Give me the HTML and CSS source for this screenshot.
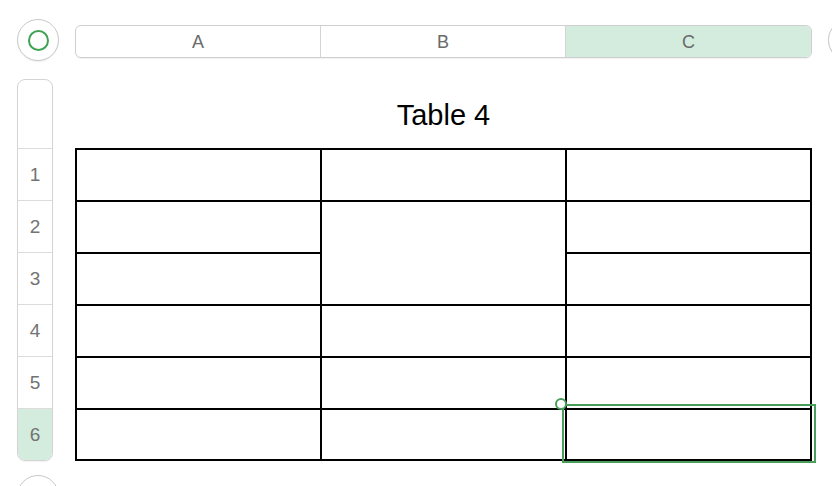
FILE: index.html
```html
<!DOCTYPE html>
<html>
<head>
<meta charset="utf-8">
<link rel="stylesheet" href="styles.css">
</head>
<body>
<div class="sheet">
  <div class="top">
    <div class="round-btn"><span class="ring"></span></div>
    <div class="col-headers">
      <div class="col">A</div>
      <div class="col">B</div>
      <div class="col sel">C</div>
    </div>
    <div class="round-btn"></div>
  </div>
  <div class="main">
    <div class="side">
      <div class="row-headers">
        <div class="rh blank"></div>
        <div class="rh">1</div>
        <div class="rh">2</div>
        <div class="rh">3</div>
        <div class="rh">4</div>
        <div class="rh">5</div>
        <div class="rh sel">6</div>
      </div>
      <div class="round-btn"></div>
    </div>
    <div class="content">
      <div class="title">Table 4</div>
      <div class="table-wrap">
        <div class="grid">
          <div class="cell"></div><div class="cell"></div><div class="cell"></div>
          <div class="cell"></div><div class="cell merged"></div><div class="cell"></div>
          <div class="cell"></div><div class="cell"></div>
          <div class="cell"></div><div class="cell"></div><div class="cell"></div>
          <div class="cell"></div><div class="cell"></div><div class="cell"></div>
          <div class="cell"></div><div class="cell"></div><div class="cell"></div>
        </div>
        <div class="selection"></div>
        <div class="handle"></div>
      </div>
    </div>
  </div>
</div>
</body>
</html>
```
FILE: styles.css
```css
html, body {
  margin: 0;
  padding: 0;
  background: #ffffff;
}
body {
  width: 832px;
  height: 486px;
  overflow: hidden;
  font-family: "Liberation Sans", Arial, sans-serif;
}
.sheet {
  display: flex;
  flex-direction: column;
  height: 486px;
  overflow: hidden;
}
.top {
  flex: none;
  display: flex;
  align-items: flex-start;
  gap: 16px;
  padding-left: 17px;
  padding-top: 19px;
  height: 42px;
}
.round-btn {
  flex: none;
  width: 42px;
  height: 42px;
  box-sizing: border-box;
  border: 1px solid #c9c9c9;
  border-radius: 50%;
  background: #fff;
  box-shadow: 0 1px 1px rgba(0,0,0,0.06);
  display: flex;
  align-items: center;
  justify-content: center;
}
.ring {
  width: 21px;
  height: 21px;
  box-sizing: border-box;
  border: 2px solid #3fa352;
  border-radius: 50%;
}
.col-headers {
  flex: none;
  margin-top: 6px;
  width: 737px;
  height: 33px;
  box-sizing: border-box;
  border: 1px solid #cfcfcf;
  border-radius: 6px;
  overflow: hidden;
  display: grid;
  grid-template-columns: 245px 245px 1fr;
  box-shadow: 0 1px 1px rgba(0,0,0,0.06);
}
.col {
  display: flex;
  align-items: center;
  justify-content: center;
  padding-top: 2px;
  font-size: 18px;
  color: #6a6a6a;
  border-right: 1px solid #d4d4d4;
}
.col.sel {
  background: #d3ecdd;
  border-right: none;
}
.main {
  flex: none;
  display: flex;
  gap: 22px;
  padding-left: 17px;
  margin-top: 18px;
}
.side {
  flex: none;
  width: 36px;
  display: flex;
  flex-direction: column;
  gap: 14px;
}
.row-headers {
  box-sizing: border-box;
  border: 1px solid #d4d4d4;
  border-radius: 8px;
  overflow: hidden;
  display: flex;
  flex-direction: column;
  box-shadow: 0 1px 1px rgba(0,0,0,0.05);
}
.rh {
  height: 51px;
  border-top: 1px solid #dcdcdc;
  display: flex;
  align-items: center;
  justify-content: center;
  font-size: 19px;
  color: #737373;
}
.rh.blank {
  height: 68px;
  border-top: none;
}
.rh.sel {
  background: #d3ecdd;
}
.content {
  flex: none;
  width: 737px;
  display: flex;
  flex-direction: column;
}
.title {
  height: 69px;
  box-sizing: border-box;
  padding-top: 20px;
  line-height: 32px;
  font-size: 29px;
  color: #000;
  text-align: center;
}
.table-wrap {
  position: relative;
}
.grid {
  display: grid;
  grid-template-columns: repeat(3, 245px);
  grid-template-rows: 52px 52px 52px 52px 52px 51px;
  border-left: 2px solid #000;
  border-top: 2px solid #000;
  width: 737px;
  box-sizing: border-box;
}
.cell {
  border-right: 2px solid #000;
  border-bottom: 2px solid #000;
  background: #fff;
}
.cell.merged {
  grid-row: span 2;
}
.selection {
  position: absolute;
  left: 487px;
  top: 256px;
  width: 254px;
  height: 59px;
  box-sizing: border-box;
  border: 2px solid #4a9e5b;
}
.handle {
  position: absolute;
  left: 480px;
  top: 250px;
  width: 12px;
  height: 12px;
  box-sizing: border-box;
  border: 2px solid #4a9e5b;
  border-radius: 50%;
  background: #fff;
}
```
